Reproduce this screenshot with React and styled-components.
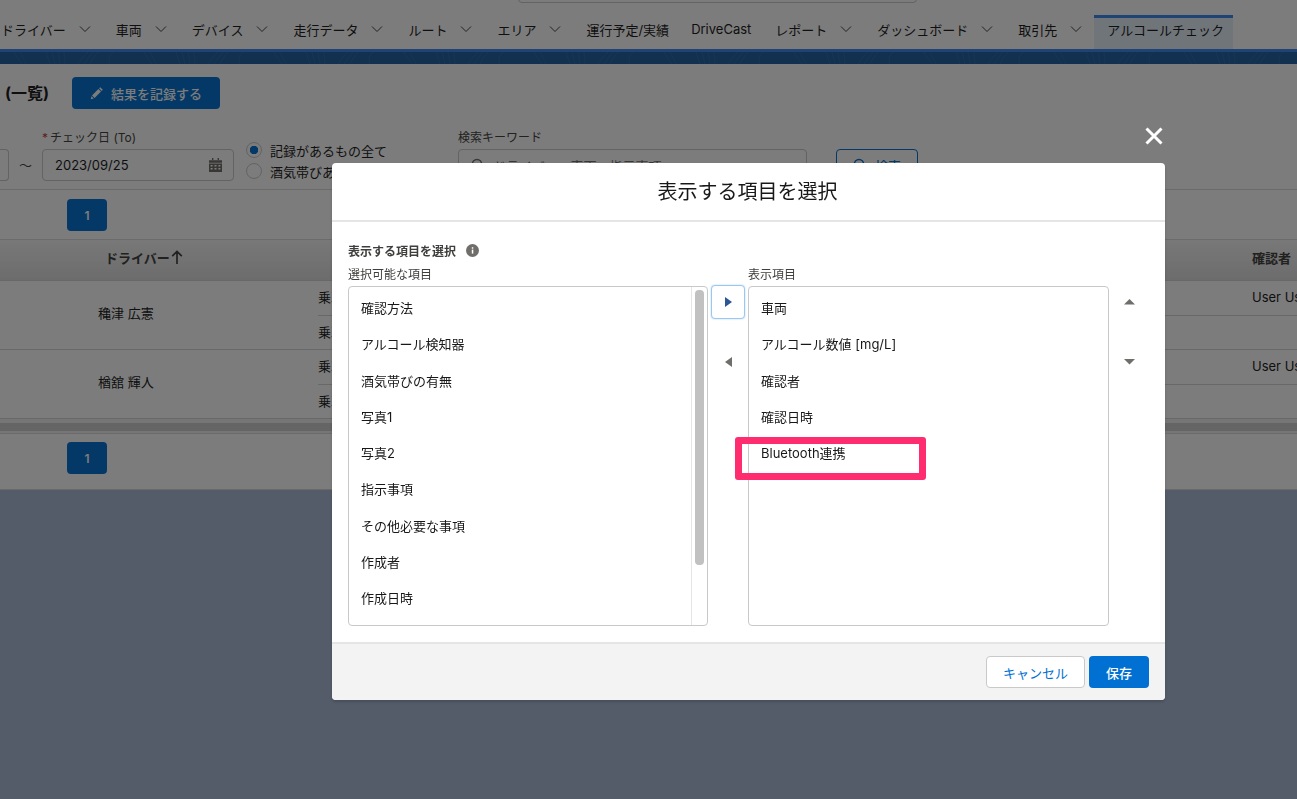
import styled, { createGlobalStyle } from 'styled-components';

const GlobalStyle = createGlobalStyle`
  html, body {
    margin: 0;
    height: 100%;
    overflow: hidden;
    background: #abbbd8;
    font-family: Inter, "Noto Sans CJK JP", sans-serif;
    color: #181818;
  }
  * { box-sizing: border-box; }
`;

const Page = styled.div`
  width: 1297px;
  height: 799px;
  overflow: hidden;
`;

const Nav = styled.nav`
  position: relative;
  display: flex;
  height: 49px;
  padding: 15px 0 0 1px;
  background: #fff;
`;

const TopSearchEdge = styled.div`
  position: absolute;
  top: -20px;
  left: 518px;
  width: 399px;
  height: 23px;
  border: 1px solid #c9c9c9;
  border-radius: 4px;
`;

const NavItem = styled.div`
  display: flex;
  align-items: center;
  gap: 13px;
  margin-right: ${p => p.$after}px;
  padding-bottom: 6px;
  font-size: 13px;
  white-space: nowrap;
  color: #181818;
`;

const ActiveTab = styled.div`
  display: flex;
  align-items: center;
  width: 139px;
  margin-left: -13px;
  padding: 0 0 9px 13px;
  border-top: 3px solid #3a86f0;
  background: #e6f0fa;
  font-size: 13px;
  white-space: nowrap;
`;

const Band = styled.div`
  height: 15px;
  border-top: 3px solid #3a86f0;
  background: #1e60a4;
  overflow: hidden;
  line-height: 0;
`;

const Main = styled.main`
  height: 426px;
  padding-top: 13px;
  background: #fff;
  border-bottom: 1px solid #d8d8d8;
`;

const TitleRow = styled.div`
  display: flex;
  align-items: center;
  gap: 23px;
  height: 32px;
  padding-left: 5px;
`;

const PageTitle = styled.h1`
  margin: 0 0 3px;
  font-size: 16px;
  font-weight: 700;
  white-space: nowrap;
`;

const BrandButton = styled.button`
  display: flex;
  align-items: center;
  gap: 7px;
  height: 32px;
  padding: 0 18px;
  border: 0;
  border-radius: 4px;
  background: #0070d2;
  color: #fff;
  font: inherit;
  font-size: 13px;
  font-weight: 500;
`;

const FilterRow = styled.div`
  display: flex;
  align-items: flex-end;
  height: 59px;
  margin-top: 22px;
  padding-bottom: 8px;
  border-bottom: 1px solid #dddbda;
`;

const Field = styled.div`
  display: flex;
  flex-direction: column;
  gap: 4px;
  width: ${p => p.$width}px;
`;

const FieldLabel = styled.label`
  height: 14px;
  font-size: 12px;
  line-height: 14px;
  color: #3e3e3c;
  white-space: nowrap;

  b {
    color: #c23934;
    font-weight: 400;
    margin-right: 2px;
  }
`;

const Input = styled.div`
  display: flex;
  align-items: center;
  justify-content: space-between;
  gap: 8px;
  height: 32px;
  padding: 0 11px 0 12px;
  border: 1px solid #c9c9c9;
  border-radius: 4px;
  background: #fff;
  font-size: 13px;
  white-space: nowrap;
`;

const CutInput = styled(Input)`
  padding: 0;
  border-left: 0;
  border-radius: 0 4px 4px 0;
`;

const Tilde = styled.span`
  width: 33px;
  height: 32px;
  font-size: 13px;
  line-height: 32px;
  text-align: center;
  color: #3e3e3c;
`;

const Placeholder = styled.span`
  flex: 1;
  font-size: 13px;
  color: #706e6b;
`;

const RadioGroup = styled.div`
  display: flex;
  flex-direction: column;
  gap: 5px;
  width: 212px;
  margin-left: 12px;
  padding-bottom: 2px;
`;

const RadioRow = styled.div`
  display: flex;
  align-items: center;
  gap: 8px;
  height: 16px;
  font-size: 13px;
  color: #181818;
  white-space: nowrap;
`;

const Radio = styled.span`
  flex: none;
  width: 16px;
  height: 16px;
  border: 1px solid #c9c9c9;
  border-radius: 50%;
  background: ${p => p.$on ? 'radial-gradient(circle, #0070d2 0 4px, #fff 4.5px)' : '#fff'};
`;

const OutlineButton = styled.button`
  display: flex;
  align-items: center;
  justify-content: center;
  gap: 8px;
  width: 82px;
  height: 32px;
  margin-left: 29px;
  border: 1px solid #0070d2;
  border-radius: 4px;
  background: #fff;
  color: #0070d2;
  font: inherit;
  font-size: 13px;
  font-weight: 500;
`;

const PagerRow = styled.div`
  padding: ${p => p.$bottom ? '8px 0 8px' : '9px 0 8px'};
  padding-left: 67px;
  border-bottom: ${p => p.$bottom ? '0' : '1px solid #dddbda'};
`;

const PageButton = styled.button`
  display: block;
  width: 40px;
  height: 32px;
  border: 0;
  border-radius: 4px;
  background: #0070d2;
  color: #fff;
  font: inherit;
  font-size: 12px;
  font-weight: 600;
`;

const TableHead = styled.div`
  display: flex;
  align-items: center;
  height: 41px;
  padding-bottom: 6px;
  border-bottom: 1px solid #d4d4d4;
  background: linear-gradient(#f7f7f7, #dedede);
  font-size: 13px;
  font-weight: 700;
  color: #3e3e3c;
`;

const HeadDriver = styled.div`
  display: flex;
  align-items: center;
  gap: 1px;
  width: 1252px;
  padding-left: 105px;
`;

const RowGroup = styled.div`
  display: flex;
  height: 69px;
  border-bottom: 1px solid #d4d4d4;
`;

const DriverCell = styled.div`
  display: flex;
  align-items: center;
  width: 318px;
  padding: 0 0 6px 98px;
  font-size: 13px;
`;

const SubRows = styled.div`
  flex: 1;
  min-width: 0;
  display: flex;
  flex-direction: column;
`;

const SubRow = styled.div`
  flex: 1;
  display: flex;
  align-items: center;
  font-size: 13px;
  white-space: nowrap;
  border-top: ${p => p.$line ? '1px solid #d4d4d4' : '0'};
  padding-bottom: 2px;
`;

const SubLabel = styled.div`
  flex: none;
  width: 934px;
`;

const TableScroll = styled.div`
  height: 15px;
  padding-top: 4px;
  background: #f3f3f3;
  border-bottom: 1px solid #dcdcdc;

  &::before {
    content: '';
    display: block;
    height: 8px;
    background: #cfcfcf;
  }
`;

const Overlay = styled.div`
  position: fixed;
  inset: 0;
  background: rgba(8, 7, 7, 0.53);
`;

const CloseButton = styled.button`
  position: fixed;
  top: 125px;
  left: 1143px;
  width: 22px;
  height: 22px;
  padding: 0;
  border: 0;
  background: none;
  color: #fff;
  line-height: 0;
`;

const Modal = styled.section`
  position: fixed;
  top: 163px;
  left: 332px;
  width: 833px;
  height: 537px;
  display: flex;
  flex-direction: column;
  border-radius: 4px;
  background: #fff;
  box-shadow: 0 2px 3px rgba(0, 0, 0, 0.16);
`;

const ModalHeader = styled.header`
  flex: none;
  height: 59px;
  border-bottom: 2px solid #e5e5e5;
  text-align: center;

  h2 {
    margin: 0;
    padding-right: 2px;
    font-size: 20px;
    font-weight: 400;
    line-height: 58px;
    color: #181818;
  }
`;

const ModalBody = styled.div`
  flex: 1;
  padding: 21px 16px 0;
`;

const SectionLabel = styled.div`
  display: flex;
  align-items: center;
  gap: 10px;
  height: 14px;
  font-size: 12px;
  font-weight: 700;
  color: #3e3e3c;
`;

const DualList = styled.div`
  display: grid;
  grid-template-columns: 360px 40px 361px 40px;
  grid-template-rows: 15px 340px;
  row-gap: 3px;
  margin-top: 11px;
`;

const ListLabel = styled.div`
  font-size: 12px;
  line-height: 14px;
  color: #3e3e3c;
  grid-column: ${p => p.$col};
`;

const ListBox = styled.div`
  display: flex;
  overflow: hidden;
  border: 1px solid #c9c9c9;
  border-radius: 4px;
  grid-row: 2;
`;

const Items = styled.ul`
  flex: 1;
  margin: 0;
  padding: 3px 0 0;
  list-style: none;
`;

const Item = styled.li`
  height: 36.3px;
  padding-left: 12px;
  font-size: 13px;
  line-height: 36px;
  color: #181818;
  white-space: nowrap;
`;

const ScrollTrack = styled.div`
  flex: none;
  width: 16px;
  padding: 3px 3px 0 3px;
  border-left: 1px solid #e5e5e5;
`;

const ScrollThumb = styled.div`
  height: 275px;
  border-radius: 4px;
  background: #c1c1c1;
`;

const ArrowColumn = styled.div`
  grid-row: 2;
  display: flex;
  flex-direction: column;
  align-items: center;
  gap: 26px;
  margin-top: -1px;
`;

const ArrowButton = styled.button`
  display: flex;
  align-items: center;
  justify-content: center;
  width: 34px;
  height: 34px;
  padding: 0;
  border: 1px solid ${p => p.$focus ? '#9cc7ef' : 'transparent'};
  border-radius: 4px;
  background: #fff;
  box-shadow: ${p => p.$focus ? '0 0 2px #a9d0f5' : 'none'};
  color: ${p => p.$focus ? '#2b5797' : '#706e6b'};
  line-height: 0;
`;

const ModalFooter = styled.footer`
  flex: none;
  display: flex;
  justify-content: flex-end;
  gap: 4px;
  height: 58px;
  padding: 12px 16px 0;
  border-top: 2px solid #e5e5e5;
  border-radius: 0 0 4px 4px;
  background: #f3f3f3;
`;

const CancelButton = styled.button`
  width: 99px;
  height: 32px;
  border: 1px solid #c9c9c9;
  border-radius: 4px;
  background: #fff;
  color: #0070d2;
  font: inherit;
  font-size: 13px;
`;

const SaveButton = styled.button`
  width: 60px;
  height: 32px;
  border: 0;
  border-radius: 4px;
  background: #0070d2;
  color: #fff;
  font: inherit;
  font-size: 13px;
  font-weight: 500;
`;

const Highlight = styled.div`
  position: absolute;
  top: 274px;
  left: 403px;
  width: 191px;
  height: 43px;
  border: 7px solid #ff2d6f;
  border-radius: 3px;
  pointer-events: none;
`;

const Chevron = () => (
  <svg width="12" height="12" viewBox="0 0 12 12" fill="none" stroke="#3e3e3c" strokeWidth="1">
    <path d="M1 3.5 6 8.5 11 3.5" />
  </svg>
);

const Pencil = () => (
  <svg width="14" height="14" viewBox="0 0 14 14" fill="currentColor">
    <path d="M10.2 1.2 12.8 3.8 11.7 4.9 9.1 2.3zM8.4 3 11 5.6 4.6 12 2 9.4zM1.5 10.2 3.8 12.5 0.8 13.2z" />
  </svg>
);

const Calendar = () => (
  <svg width="13" height="14" viewBox="0 0 13 14" fill="#706e6b">
    <path d="M3 0h1.4v2H3zM8.6 0H10v2H8.6zM0 2.2h13v2.6H0zM0 5.6h13V14H0zM1.6 7v1.6h2V7zm3.9 0v1.6h2V7zm3.9 0v1.6h2V7zM1.6 10v1.6h2V10zm3.9 0v1.6h2V10zm3.9 0v1.6h2V10z" fillRule="evenodd" />
  </svg>
);

const SearchIcon = ({ color }) => (
  <svg width="14" height="14" viewBox="0 0 14 14" fill="none" stroke={color} strokeWidth="1.5">
    <circle cx="6" cy="6" r="4.6" />
    <path d="M9.4 9.4 13 13" />
  </svg>
);

const SortUp = () => (
  <svg width="12" height="14" viewBox="0 0 12 14" fill="none" stroke="#3e3e3c" strokeWidth="1.7">
    <path d="M6 14V1.5M1.2 6.2 6 1.5l4.8 4.7" />
  </svg>
);

const InfoIcon = () => (
  <svg width="13" height="13" viewBox="0 0 13 13">
    <circle cx="6.5" cy="6.5" r="6.5" fill="#706e6b" />
    <rect x="5.8" y="5.6" width="1.5" height="4" fill="#fff" />
    <rect x="5.8" y="3.2" width="1.5" height="1.5" fill="#fff" />
  </svg>
);

const Triangle = ({ dir }) => {
  const points = {
    right: '2,1 9,6 2,11',
    left: '9,1 2,6 9,11',
    up: '0,8.5 11,8.5 5.5,3',
    down: '0,3 11,3 5.5,8.5',
  }[dir];
  return (
    <svg width="11" height="12" viewBox="0 0 11 12" fill="currentColor">
      <polygon points={points} />
    </svg>
  );
};

const BandPattern = () => {
  // repeated strokes of the header texture
  const cells = Array.from({ length: 10 }, (_, i) => i * 130);
  return (
    <svg width="1297" height="12" viewBox="0 0 1297 12" fill="none" stroke="#3a78b8" strokeWidth="0.6" opacity="0.7">
      {cells.map(x => (
        <g key={x} transform={`translate(${x} 0)`}>
          <path d="M14 0c2 4 5 8 8 12M20 0c2 4 4 8 6 12M46 0l4 12M52 0l3 12M58 0l2 12M64 0l1 12" />
          <path d="M78 12c3-4 6-9 10-12M84 12c3-4 6-9 9-12M90 12c2-4 5-9 8-12M110 12c-2-4-1-9 3-12" />
        </g>
      ))}
    </svg>
  );
};

const navItems = [
  { label: 'ドライバー', menu: true, after: 25 },
  { label: '車両', menu: true, after: 25 },
  { label: 'デバイス', menu: true, after: 25 },
  { label: '走行データ', menu: true, after: 25 },
  { label: 'ルート', menu: true, after: 25 },
  { label: 'エリア', menu: true, after: 25 },
  { label: '運行予定/実績', menu: false, after: 22 },
  { label: 'DriveCast', menu: false, after: 24 },
  { label: 'レポート', menu: true, after: 25 },
  { label: 'ダッシュボード', menu: true, after: 25 },
  { label: '取引先', menu: true, after: 25 },
];

const availableFields = ['確認方法', 'アルコール検知器', '酒気帯びの有無', '写真1', '写真2', '指示事項', 'その他必要な事項', '作成者', '作成日時'];
const selectedFields = ['車両', 'アルコール数値 [mg/L]', '確認者', '確認日時', 'Bluetooth連携'];

const drivers = ['穐津 広憲', '楢舘 輝人'];

export default function App() {
  return (
    <Page>
      <GlobalStyle />
      <Nav>
        <TopSearchEdge />
        {navItems.map(item => (
          <NavItem key={item.label} $after={item.after}>
            {item.label}
            {item.menu && <Chevron />}
          </NavItem>
        ))}
        <ActiveTab>アルコールチェック</ActiveTab>
      </Nav>
      <Band><BandPattern /></Band>
      <Main>
        <TitleRow>
          <PageTitle>(一覧)</PageTitle>
          <BrandButton><Pencil />結果を記録する</BrandButton>
        </TitleRow>
        <FilterRow>
          <Field $width={9}>
            <CutInput />
          </Field>
          <Tilde>〜</Tilde>
          <Field $width={192}>
            <FieldLabel><b>*</b>チェック日 (To)</FieldLabel>
            <Input>2023/09/25<Calendar /></Input>
          </Field>
          <RadioGroup>
            <RadioRow><Radio $on />記録があるもの全て</RadioRow>
            <RadioRow><Radio />酒気帯びあり</RadioRow>
          </RadioGroup>
          <Field $width={349}>
            <FieldLabel>検索キーワード</FieldLabel>
            <Input>
              <SearchIcon color="#706e6b" />
              <Placeholder>ドライバー、車両、指示事項</Placeholder>
            </Input>
          </Field>
          <OutlineButton><SearchIcon color="#0070d2" />検索</OutlineButton>
        </FilterRow>
        <PagerRow><PageButton>1</PageButton></PagerRow>
        <TableHead>
          <HeadDriver>ドライバー<SortUp /></HeadDriver>
          <div>確認者</div>
        </TableHead>
        {drivers.map(name => (
          <RowGroup key={name}>
            <DriverCell>{name}</DriverCell>
            <SubRows>
              <SubRow>
                <SubLabel>乗車前</SubLabel>
                <div>User User</div>
              </SubRow>
              <SubRow $line>
                <SubLabel>乗車後</SubLabel>
              </SubRow>
            </SubRows>
          </RowGroup>
        ))}
        <TableScroll />
        <PagerRow $bottom><PageButton>1</PageButton></PagerRow>
      </Main>

      <Overlay />
      <CloseButton aria-label="閉じる">
        <svg width="22" height="22" viewBox="0 0 22 22" fill="none" stroke="currentColor" strokeWidth="3">
          <path d="M3.5 3.5 18.5 18.5M18.5 3.5 3.5 18.5" />
        </svg>
      </CloseButton>
      <Modal>
        <ModalHeader><h2>表示する項目を選択</h2></ModalHeader>
        <ModalBody>
          <SectionLabel>表示する項目を選択<InfoIcon /></SectionLabel>
          <DualList>
            <ListLabel $col={1}>選択可能な項目</ListLabel>
            <ListLabel $col={3}>表示項目</ListLabel>
            <ListBox>
              <Items>
                {availableFields.map(f => <Item key={f}>{f}</Item>)}
              </Items>
              <ScrollTrack><ScrollThumb /></ScrollTrack>
            </ListBox>
            <ArrowColumn>
              <ArrowButton $focus><Triangle dir="right" /></ArrowButton>
              <ArrowButton><Triangle dir="left" /></ArrowButton>
            </ArrowColumn>
            <ListBox>
              <Items>
                {selectedFields.map(f => <Item key={f}>{f}</Item>)}
              </Items>
            </ListBox>
            <ArrowColumn>
              <ArrowButton><Triangle dir="up" /></ArrowButton>
              <ArrowButton><Triangle dir="down" /></ArrowButton>
            </ArrowColumn>
          </DualList>
        </ModalBody>
        <ModalFooter>
          <CancelButton>キャンセル</CancelButton>
          <SaveButton>保存</SaveButton>
        </ModalFooter>
        <Highlight />
      </Modal>
    </Page>
  );
}
